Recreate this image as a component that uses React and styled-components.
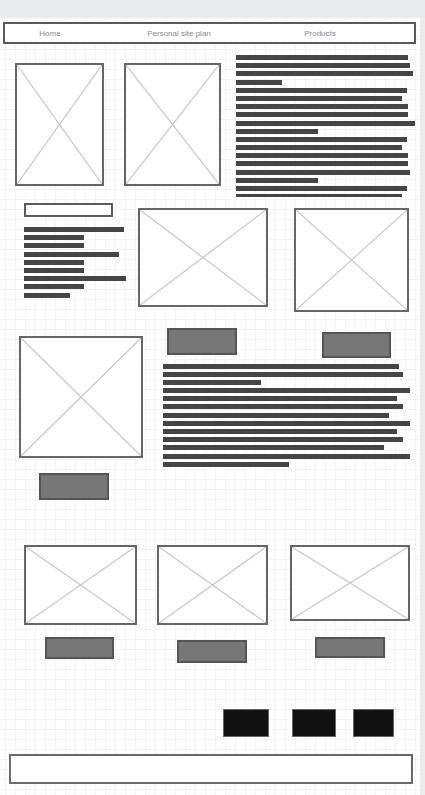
import React from 'react';
import styled, { createGlobalStyle } from 'styled-components';

const GlobalStyle = createGlobalStyle`
  body {
    margin: 0;
    font-family: "Liberation Sans", Arial, sans-serif;
    background: #ececec;
  }
`;

const topBars = [172, 174, 177, 46, 171, 166, 172, 172, 179, 82, 171, 166, 172, 172, 174, 82, 171, 166];
const sideBars = [100, 60, 60, 95, 60, 60, 102, 60, 46];
const mainBars = [236, 240, 98, 247, 234, 240, 226, 247, 234, 240, 221, 247, 126];

const Placeholder = ({ w, h, mt, ml }) => (
  <Frame $w={w} $h={h} $mt={mt} $ml={ml}>
    <svg width="100%" height="100%" viewBox="0 0 100 100" preserveAspectRatio="none">
      <line x1="0" y1="0" x2="100" y2="100" stroke="#c9c9c9" strokeWidth="1.3" vectorEffect="non-scaling-stroke" />
      <line x1="100" y1="0" x2="0" y2="100" stroke="#c9c9c9" strokeWidth="1.3" vectorEffect="non-scaling-stroke" />
    </svg>
  </Frame>
);

const TextLines = ({ widths, mt, ml, lastHeight }) => (
  <Lines $mt={mt} $ml={ml}>
    {widths.map((w, i) => (
      <Line key={i} $w={w} $h={i === widths.length - 1 && lastHeight ? lastHeight : 5} />
    ))}
  </Lines>
);

const App = () => {
  return (
    <Page>
      <GlobalStyle />
      <TopBand />
      <Body>
        <Canvas>
          <Nav>
            <NavLink>Home</NavLink>
            <NavLink>Personal site plan</NavLink>
            <NavLink>Products</NavLink>
          </Nav>

          <Row $mt={11} $h={148} $pl={15}>
            <Placeholder w={89} h={123} mt={8} />
            <Placeholder w={97} h={123} mt={8} ml={20} />
            <TextLines widths={topBars} ml={15} lastHeight={3} />
          </Row>

          <Row $h={125} $pl={24}>
            <Column $w={102}>
              <SearchBox />
              <TextLines widths={sideBars} mt={10} />
            </Column>
            <Placeholder w={130} h={99} mt={5} ml={12} />
            <Placeholder w={115} h={104} mt={5} ml={26} />
          </Row>

          <Row $h={217} $pl={19}>
            <Column>
              <Placeholder w={124} h={122} mt={8} />
              <GreyButton $w={70} $h={27} $ml={20} $mt={15} />
            </Column>
            <Column $ml={20}>
              <ButtonRow>
                <GreyButton $w={70} $h={27} $ml={4} />
                <GreyButton $w={69} $h={26} $ml={85} $mt={4} />
              </ButtonRow>
              <TextLines widths={mainBars} mt={0.5} />
            </Column>
          </Row>

          <Row $h={164} $pl={24}>
            <Column>
              <Placeholder w={113} h={80} />
              <GreyButton $w={69} $h={22} $ml={21} $mt={12} />
            </Column>
            <Column $ml={20}>
              <Placeholder w={111} h={80} />
              <GreyButton $w={70} $h={23} $ml={20} $mt={15} />
            </Column>
            <Column $ml={22}>
              <Placeholder w={120} h={76} />
              <GreyButton $w={70} $h={21} $ml={25} $mt={16} />
            </Column>
          </Row>

          <Row $h={28} $pl={223}>
            <DarkButton $w={46} />
            <DarkButton $w={44} $ml={23} />
            <DarkButton $w={41} $ml={17} />
          </Row>

          <Footer />
        </Canvas>
        <Scrollbar />
      </Body>
    </Page>
  );
};

export default App;

const Page = styled.div`
  width: 425px;
  min-height: 795px;
  display: flex;
  flex-direction: column;
  background: #ececec;
`;

const TopBand = styled.div`
  height: 18px;
  background: #e9eaeb;
`;

const Body = styled.div`
  display: flex;
  flex: 1;
`;

const Canvas = styled.div`
  width: 420px;
  min-height: 777px;
  overflow: hidden;
  background-color: #fff;
  background-image:
    linear-gradient(to right, #f4f4f4 1px, transparent 1px),
    linear-gradient(to bottom, #f4f4f4 1px, transparent 1px);
  background-size: 10px 10px;
  background-position: 5px 1px;
`;

const Scrollbar = styled.div`
  flex: 1;
  background: #ececec;
`;

const Nav = styled.nav`
  box-sizing: border-box;
  margin: 4px 0 0 3px;
  width: 413px;
  height: 22px;
  border: 2px solid #5a5a5a;
  background: #fff;
  display: grid;
  grid-template-columns: 90px 168px 114px;
  align-items: center;
`;

const NavLink = styled.span`
  text-align: center;
  font-size: 8px;
  color: #8a8a8a;
  white-space: nowrap;
`;

const Row = styled.div`
  display: flex;
  align-items: flex-start;
  height: ${(p) => p.$h}px;
  margin-top: ${(p) => p.$mt || 0}px;
  padding-left: ${(p) => p.$pl || 0}px;
  overflow: hidden;
`;

const Column = styled.div`
  display: flex;
  flex-direction: column;
  align-items: flex-start;
  flex-shrink: 0;
  width: ${(p) => (p.$w ? `${p.$w}px` : 'auto')};
  margin-left: ${(p) => p.$ml || 0}px;
`;

const ButtonRow = styled.div`
  display: flex;
  align-items: flex-start;
  height: 35px;
`;

const Frame = styled.div`
  box-sizing: border-box;
  flex-shrink: 0;
  width: ${(p) => p.$w}px;
  height: ${(p) => p.$h}px;
  margin-top: ${(p) => p.$mt || 0}px;
  margin-left: ${(p) => p.$ml || 0}px;
  border: 2px solid #666;
  background: #fff;

  svg {
    display: block;
  }
`;

const Lines = styled.div`
  display: flex;
  flex-direction: column;
  gap: 3.2px;
  margin-top: ${(p) => p.$mt || 0}px;
  margin-left: ${(p) => p.$ml || 0}px;
`;

const Line = styled.div`
  width: ${(p) => p.$w}px;
  height: ${(p) => p.$h}px;
  background: #454545;
`;

const SearchBox = styled.div`
  box-sizing: border-box;
  width: 89px;
  height: 14px;
  border: 2px solid #5a5a5a;
  background: #fff;
`;

const GreyButton = styled.div`
  box-sizing: border-box;
  flex-shrink: 0;
  width: ${(p) => p.$w}px;
  height: ${(p) => p.$h}px;
  margin-top: ${(p) => p.$mt || 0}px;
  margin-left: ${(p) => p.$ml || 0}px;
  background: #777;
  border: 2px solid #555;
`;

const DarkButton = styled.div`
  box-sizing: border-box;
  flex-shrink: 0;
  width: ${(p) => p.$w}px;
  height: 28px;
  margin-left: ${(p) => p.$ml || 0}px;
  background: #111;
  border: 1px solid #666;
`;

const Footer = styled.div`
  box-sizing: border-box;
  margin: 17px 0 0 9px;
  width: 404px;
  height: 30px;
  border: 2px solid #6a6a6a;
  background: #fff;
`;
